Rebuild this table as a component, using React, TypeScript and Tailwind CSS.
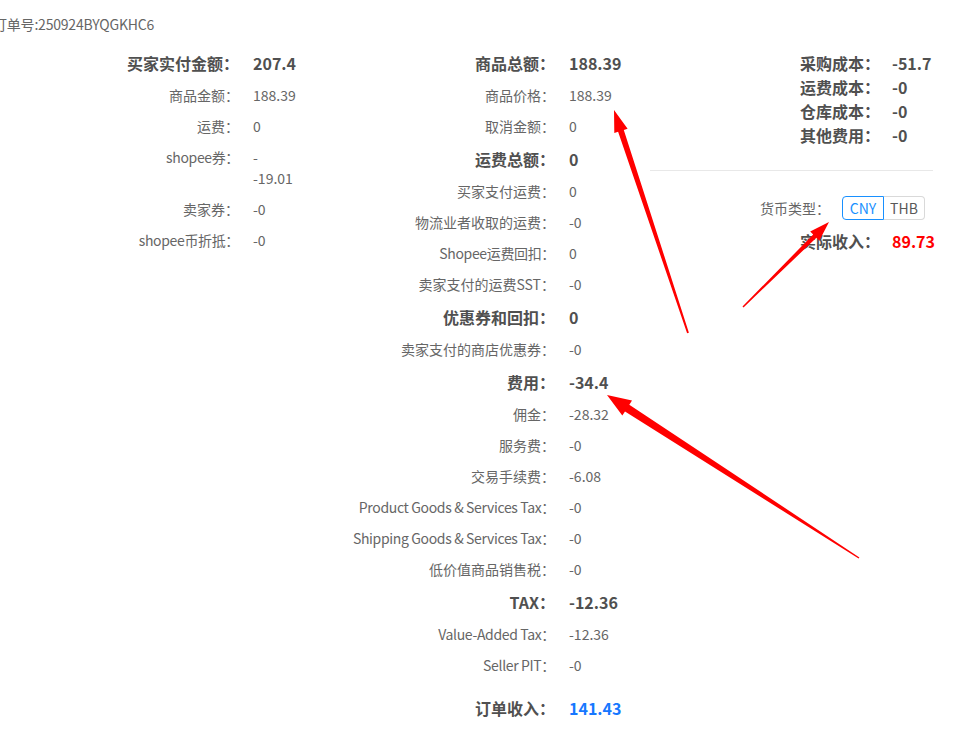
import React from 'react';

type Row = { label: string; value: React.ReactNode; bold?: boolean; latin?: boolean };

const font = { fontFamily: '"Noto Sans CJK SC", "Noto Sans", sans-serif' };

const leftRows: Row[] = [
  { label: '买家实付金额：', value: '207.4', bold: true },
  { label: '商品金额：', value: '188.39' },
  { label: '运费：', value: '0' },
  {
    label: 'shopee券：',
    latin: true,
    value: (
      <span className="flex flex-col">
        <span>-</span>
        <span>-19.01</span>
      </span>
    ),
  },
  { label: '卖家券：', value: '-0' },
  { label: 'shopee币折抵：', value: '-0', latin: true },
];

const midRows: Row[] = [
  { label: '商品总额：', value: '188.39', bold: true },
  { label: '商品价格：', value: '188.39' },
  { label: '取消金额：', value: '0' },
  { label: '运费总额：', value: '0', bold: true },
  { label: '买家支付运费：', value: '0' },
  { label: '物流业者收取的运费：', value: '-0' },
  { label: 'Shopee运费回扣：', value: '0', latin: true },
  { label: '卖家支付的运费SST：', value: '-0' },
  { label: '优惠券和回扣：', value: '0', bold: true },
  { label: '卖家支付的商店优惠券：', value: '-0' },
  { label: '费用：', value: '-34.4', bold: true },
  { label: '佣金：', value: '-28.32' },
  { label: '服务费：', value: '-0' },
  { label: '交易手续费：', value: '-6.08' },
  { label: 'Product Goods & Services Tax：', value: '-0', latin: true },
  { label: 'Shipping Goods & Services Tax：', value: '-0', latin: true },
  { label: '低价值商品销售税：', value: '-0' },
  { label: 'TAX：', value: '-12.36', bold: true },
  { label: 'Value-Added Tax：', value: '-12.36', latin: true },
  { label: 'Seller PIT：', value: '-0', latin: true },
];

const costs = [
  { label: '采购成本：', value: '-51.7' },
  { label: '运费成本：', value: '-0' },
  { label: '仓库成本：', value: '-0' },
  { label: '其他费用：', value: '-0' },
];

function DetailRow({ row }: { row: Row }) {
  if (row.bold) {
    return (
      <div className="flex py-[5px] text-[16px] leading-[24px] font-bold text-[#505050]">
        <div className="w-[239px] shrink-0 text-right">{row.label}</div>
        <div className="ml-[14px]">{row.value}</div>
      </div>
    );
  }
  return (
    <div className="flex py-[5px] text-[14px] leading-[21px] text-[#666]">
      <div className={row.latin ? 'w-[239px] shrink-0 text-right tracking-[-0.35px]' : 'w-[239px] shrink-0 text-right'}>
        {row.label}
      </div>
      <div className="ml-[14px]">{row.value}</div>
    </div>
  );
}

// red annotation arrows drawn over the page
function arrowPoints(tx: number, ty: number, hx: number, hy: number, w0: number, w1: number, hw: number, hl: number) {
  const len = Math.hypot(hx - tx, hy - ty);
  const dx = (hx - tx) / len;
  const dy = (hy - ty) / len;
  const nx = -dy;
  const ny = dx;
  const bx = hx - dx * hl;
  const by = hy - dy * hl;
  const pts = [
    [tx + (nx * w0) / 2, ty + (ny * w0) / 2],
    [bx + (nx * w1) / 2, by + (ny * w1) / 2],
    [bx + nx * hw, by + ny * hw],
    [hx, hy],
    [bx - nx * hw, by - ny * hw],
    [bx - (nx * w1) / 2, by - (ny * w1) / 2],
    [tx - (nx * w0) / 2, ty - (ny * w0) / 2],
  ];
  return pts.map((p) => p.map((v) => v.toFixed(1)).join(',')).join(' ');
}

function Arrows() {
  return (
    <svg className="pointer-events-none absolute left-0 top-0" width="966" height="736">
      <polygon points={arrowPoints(688, 333, 614, 110, 2, 6, 7, 22)} fill="#ff0000" />
      <polygon points={arrowPoints(743, 307, 829, 222, 1.5, 4.5, 6.5, 20)} fill="#ff0000" />
      <polygon points={arrowPoints(859, 558, 607, 395, 1.5, 8, 9, 24)} fill="#ff0000" />
    </svg>
  );
}

export default function App() {
  return (
    <div className="relative h-[736px] w-[966px] overflow-hidden bg-white" style={font}>
      <div className="ml-[-7px] pt-[14px] text-[14px] leading-[20px] tracking-[-0.2px] text-[#666]">订单号:250924BYQGKHC6</div>

      <div className="mt-[12px] flex">
        <div className="w-[316px] shrink-0">
          {leftRows.map((r) => (
            <DetailRow key={r.label} row={r} />
          ))}
        </div>

        <div className="w-[316px] shrink-0">
          {midRows.map((r) => (
            <DetailRow key={r.label} row={r} />
          ))}
          <div className="mt-[10px] flex py-[5px] text-[16px] leading-[24px] font-bold text-[#505050]">
            <div className="w-[239px] shrink-0 text-right">订单收入：</div>
            <div className="ml-[14px] text-[#1677ff]">141.43</div>
          </div>
        </div>

        <div className="flex-1 pr-[33px] pt-[5px]">
          <div className="flex flex-col items-end">
            {costs.map((c) => (
              <div key={c.label} className="flex text-[16px] leading-[24px] font-bold text-[#505050]">
                <div>{c.label}</div>
                <div className="ml-[12px] w-[41px]">{c.value}</div>
              </div>
            ))}
          </div>
          <div className="ml-[18px] mt-[23px] border-t border-[#e8e8e8]" />
          <div className="mt-[25px] flex items-center justify-end pr-[8px]">
            <span className="text-[14px] text-[#666]">货币类型：</span>
            <div className="ml-[12px] flex h-[24px] text-[14px] leading-[22px]">
              <div className="w-[42px] rounded-l-[4px] border border-[#1890ff] text-center text-[#1890ff]">CNY</div>
              <div className="w-[41px] rounded-r-[4px] border border-l-0 border-[#d9d9d9] text-center text-[#595959]">THB</div>
            </div>
          </div>
          <div className="mt-[9px] flex justify-end text-[16px] leading-[24px] font-bold">
            <div className="text-[#505050]">实际收入：</div>
            <div className="ml-[12px] w-[41px] text-[#ff0000]">89.73</div>
          </div>
        </div>
      </div>

      <Arrows />
    </div>
  );
}
